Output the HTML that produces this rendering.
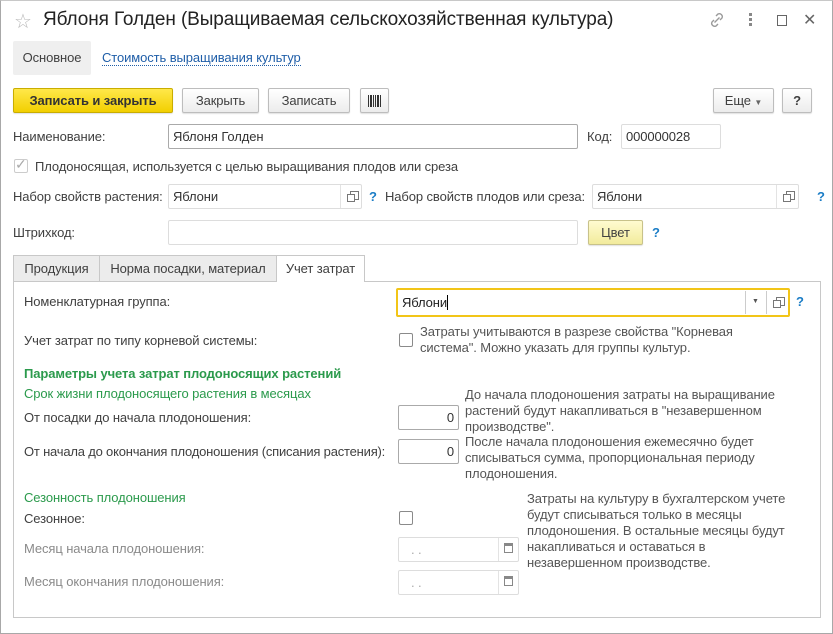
<!DOCTYPE html>
<html><head><meta charset="utf-8"><style>
*{box-sizing:border-box;margin:0;padding:0}
body{width:833px;height:634px;background:#fff;font-family:"Liberation Sans",Arial,sans-serif;font-size:13px;letter-spacing:-0.1px;color:#404040;position:relative;overflow:hidden}
.a{position:absolute;white-space:nowrap}
.win{position:absolute;left:0;top:0;width:833px;height:634px;border:1px solid #a8a8a8;border-top:1px solid #c8c8c8}
.btn{position:absolute;height:25px;border:1px solid #bdbdbd;border-radius:2px;background:linear-gradient(#fff,#ececec);text-align:center;line-height:23px;color:#404040;box-shadow:0 1px 1px rgba(0,0,0,.12)}
.inp{position:absolute;height:25px;border:1px solid #c6c6c6;border-radius:2px;background:#fff;padding-left:4px;line-height:23px;color:#333}
.q{position:absolute;color:#1b7dc6;font-weight:bold;font-size:13px}
.open{position:absolute;width:9px;height:9px;border:1px solid #777}
.open:after{content:"";position:absolute;left:-4px;top:2px;width:6px;height:6px;border:1px solid #777;background:#fff}
.cb{position:absolute;width:14px;height:14px;border:1px solid #8a8a8a;border-radius:2px;background:#fff}
.g{color:#2b9a4c}
.gray{color:#8a8a8a}
.note{position:absolute;line-height:16px;color:#555}
.lbl{position:absolute;white-space:nowrap;line-height:16px}
</style></head><body>
<div class="win"></div>
<div class="a" style="left:14px;top:9px;font-size:20px;color:#b8b8b8">☆</div>
<div class="a" style="left:43px;top:9px;font-size:19px;color:#222;letter-spacing:-0.1px">Яблоня Голден (Выращиваемая сельскохозяйственная культура)</div>
<svg class="a" style="left:708px;top:11px" width="18" height="18" viewBox="0 0 18 18"><g fill="none" stroke="#9a9a9a" stroke-width="1.4"><path d="M8 5l2-2a3 3 0 014 4l-2 2M10 13l-2 2a3 3 0 01-4-4l2-2M6.5 11.5l5-5"/></g></svg>
<div class="a" style="left:749px;top:13px;width:3px;line-height:0"><div style="width:3px;height:3px;background:#888;margin-bottom:2px"></div><div style="width:3px;height:3px;background:#888;margin-bottom:2px"></div><div style="width:3px;height:3px;background:#888"></div></div>
<div class="a" style="left:777px;top:15px;width:10px;height:11px;border:1.5px solid #666"></div>
<div class="a" style="left:803px;top:10px;font-size:16px;color:#666">✕</div>

<div class="a" style="left:13px;top:41px;width:78px;height:34px;background:#efefef;border-radius:2px;line-height:34px;text-align:center;color:#404040">Основное</div>
<div class="a" style="left:102px;top:50px;color:#1f5ea8;border-bottom:1px dotted #1f5ea8;line-height:15px">Стоимость выращивания культур</div>

<div class="btn" style="left:13px;top:88px;width:160px;background:linear-gradient(#ffe84a,#f2cf00);border-color:#c9ad00;font-weight:bold;color:#333">Записать и закрыть</div>
<div class="btn" style="left:182px;top:88px;width:77px">Закрыть</div>
<div class="btn" style="left:268px;top:88px;width:82px">Записать</div>
<div class="btn" style="left:360px;top:88px;width:29px"><svg width="14" height="12" style="margin-top:6px" viewBox="0 0 14 12"><g fill="#333"><rect x="0" width="1" height="12"/><rect x="2" width="2" height="12"/><rect x="5" width="1" height="12"/><rect x="7" width="1" height="12"/><rect x="9" width="2" height="12"/><rect x="12" width="1" height="12"/></g></svg></div>
<div class="btn" style="left:713px;top:88px;width:61px">Еще <span style="font-size:8px;color:#666">▼</span></div>
<div class="btn" style="left:782px;top:88px;width:30px;font-weight:bold">?</div>

<div class="lbl" style="left:13px;top:129px">Наименование:</div>
<div class="inp" style="left:168px;top:124px;width:410px;border-color:#aaa">Яблоня Голден</div>
<div class="lbl" style="left:587px;top:129px">Код:</div>
<div class="inp" style="left:621px;top:124px;width:100px;border-color:#ddd">000000028</div>

<div class="cb" style="left:14px;top:159px;border-color:#ccc"></div>
<div class="a" style="left:15px;top:156px;color:#aaa;font-size:14px">✓</div>
<div class="lbl" style="left:35px;top:159px">Плодоносящая, используется с целью выращивания плодов или среза</div>

<div class="lbl" style="left:13px;top:189px">Набор свойств растения:</div>
<div class="inp" style="left:168px;top:184px;width:194px;border-color:#ddd">Яблони</div>
<div class="a" style="left:340px;top:185px;width:1px;height:23px;background:#e3e3e3"></div>
<div class="open" style="left:350px;top:191px"></div>
<div class="q" style="left:369px;top:189px">?</div>
<div class="lbl" style="left:385px;top:189px">Набор свойств плодов или среза:</div>
<div class="inp" style="left:592px;top:184px;width:207px;border-color:#ddd">Яблони</div>
<div class="a" style="left:776px;top:185px;width:1px;height:23px;background:#e3e3e3"></div>
<div class="open" style="left:786px;top:191px"></div>
<div class="q" style="left:817px;top:189px">?</div>

<div class="lbl" style="left:13px;top:225px">Штрихкод:</div>
<div class="inp" style="left:168px;top:220px;width:410px;border-color:#ddd"></div>
<div class="btn" style="left:588px;top:220px;width:55px;background:linear-gradient(#fffbd0,#f2eb9c);border-color:#c8c28a">Цвет</div>
<div class="q" style="left:652px;top:225px">?</div>

<div class="a" style="left:13px;top:255px;width:87px;height:27px;background:#ececec;border:1px solid #c8c8c8;line-height:25px;text-align:center">Продукция</div>
<div class="a" style="left:99px;top:255px;width:178px;height:27px;background:#ececec;border:1px solid #c8c8c8;line-height:25px;text-align:center">Норма посадки, материал</div>
<div class="a" style="left:276px;top:255px;width:89px;height:27px;background:#fff;border:1px solid #c8c8c8;border-bottom:none;line-height:25px;text-align:center;z-index:2">Учет затрат</div>
<div class="a" style="left:13px;top:281px;width:808px;height:337px;border:1px solid #c8c8c8"></div>

<div class="lbl" style="left:24px;top:294px">Номенклатурная группа:</div>
<div class="a" style="left:396px;top:288px;width:394px;height:29px;border:2px solid #f2c518;border-radius:2px;background:#fff;line-height:25px;padding-left:4px;color:#222">Яблони<span style="display:inline-block;width:1px;height:15px;background:#000;vertical-align:-3px"></span></div>
<div class="a" style="left:745px;top:291px;width:1px;height:23px;background:#ccc"></div>
<div class="a" style="left:752px;top:298px;font-size:7px;color:#555">▼</div>
<div class="a" style="left:766px;top:291px;width:1px;height:23px;background:#ccc"></div>
<div class="open" style="left:776px;top:297px"></div>
<div class="q" style="left:796px;top:294px">?</div>

<div class="lbl" style="left:24px;top:333px">Учет затрат по типу корневой системы:</div>
<div class="cb" style="left:399px;top:333px"></div>
<div class="note" style="left:420px;top:324px">Затраты учитываются в разрезе свойства "Корневая<br>система". Можно указать для группы культур.</div>

<div class="lbl g" style="left:24px;top:366px;font-weight:bold">Параметры учета затрат плодоносящих растений</div>
<div class="lbl g" style="left:24px;top:386px">Срок жизни плодоносящего растения в месяцах</div>
<div class="lbl" style="left:24px;top:410px">От посадки до начала плодоношения:</div>
<div class="inp" style="left:398px;top:405px;width:61px;border-color:#aaa;text-align:right;padding-right:4px">0</div>
<div class="note" style="left:465px;top:387px">До начала плодоношения затраты на выращивание<br>растений будут накапливаться в "незавершенном<br>производстве".</div>
<div class="lbl" style="left:24px;top:444px;letter-spacing:-0.2px">От начала до окончания плодоношения (списания растения):</div>
<div class="inp" style="left:398px;top:439px;width:61px;border-color:#aaa;text-align:right;padding-right:4px">0</div>
<div class="note" style="left:465px;top:434px">После начала плодоношения ежемесячно будет<br>списываться сумма, пропорциональная периоду<br>плодоношения.</div>

<div class="lbl g" style="left:24px;top:490px">Сезонность плодоношения</div>
<div class="lbl" style="left:24px;top:511px">Сезонное:</div>
<div class="cb" style="left:399px;top:511px"></div>
<div class="lbl gray" style="left:24px;top:541px">Месяц начала плодоношения:</div>
<div class="inp" style="left:398px;top:537px;width:121px;border-color:#ddd;color:#aaa;padding-left:12px">. .</div>
<div class="a" style="left:498px;top:538px;width:1px;height:23px;background:#e3e3e3"></div>
<div class="a" style="left:504px;top:543px;width:9px;height:10px;border:1px solid #888;border-top-width:3px"></div>
<div class="lbl gray" style="left:24px;top:574px">Месяц окончания плодоношения:</div>
<div class="inp" style="left:398px;top:570px;width:121px;border-color:#ddd;color:#aaa;padding-left:12px">. .</div>
<div class="a" style="left:498px;top:571px;width:1px;height:23px;background:#e3e3e3"></div>
<div class="a" style="left:504px;top:576px;width:9px;height:10px;border:1px solid #888;border-top-width:3px"></div>
<div class="note" style="left:527px;top:491px">Затраты на культуру в бухгалтерском учете<br>будут списываться только в месяцы<br>плодоношения. В остальные месяцы будут<br>накапливаться и оставаться в<br>незавершенном производстве.</div>
</body></html>
